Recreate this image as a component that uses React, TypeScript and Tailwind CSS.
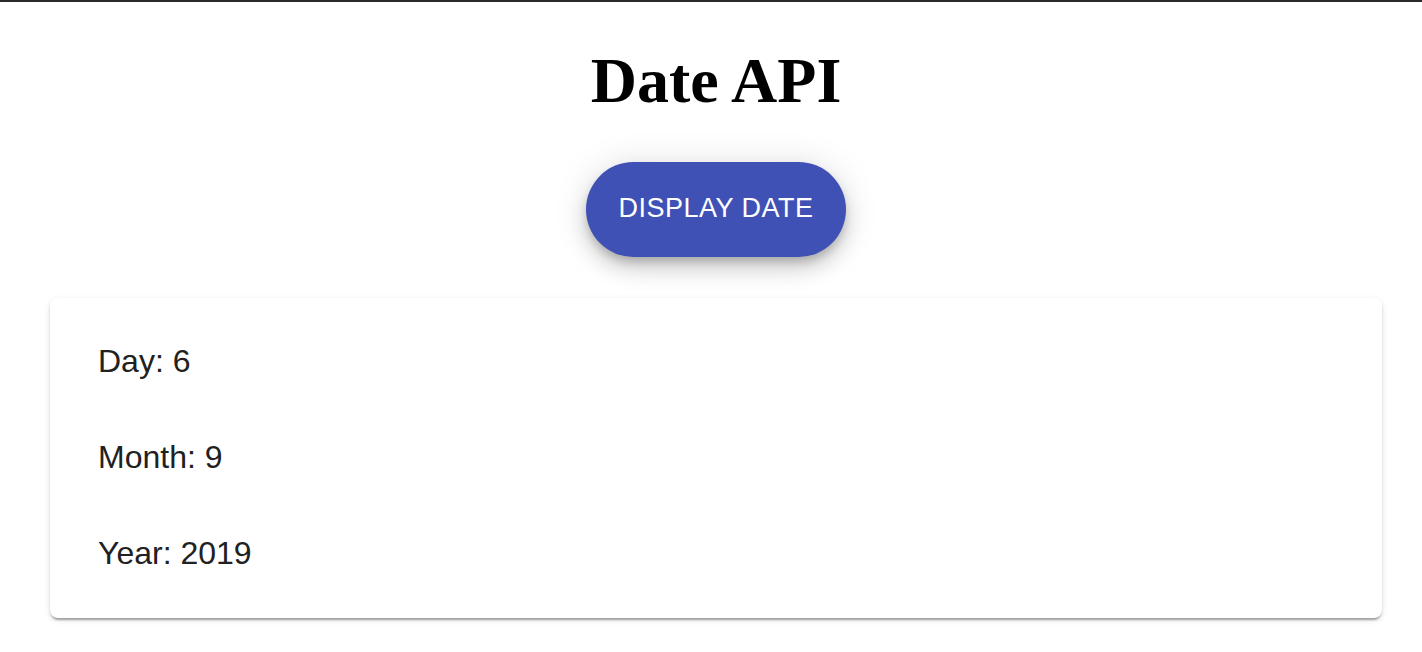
import React from "react";

const rows = [
      { label: "Day", value: 6 },
      { label: "Month", value: 9 },
      { label: "Year", value: 2019 },
];

export default function App() {
      return (
            <div className="min-h-[652px] bg-white">
                  <div className="h-[2px] bg-[#2b2b2b]" />
                  <div className="pl-[50px] pr-[40px]">
                        <h1 className="mt-[42px] text-center font-['Liberation_Serif',serif] text-[64px] leading-[74px] font-bold text-black">
                              Date API
                        </h1>
                        <div className="mt-[44px] flex justify-center">
                              <button
                                    type="button"
                                    className="flex h-[95px] w-[260px] items-center justify-center rounded-full bg-[#3f51b5] pb-[3px] font-['Liberation_Sans',Arial,sans-serif] text-[27px] tracking-[0.5px] font-normal text-white uppercase shadow-[0_6px_10px_-2px_rgba(0,0,0,0.2),0_12px_20px_0_rgba(0,0,0,0.14),0_2px_36px_0_rgba(0,0,0,0.12)]"
                              >
                                    Display Date
                              </button>
                        </div>
                        <div className="mt-[41px] flex flex-col gap-[48px] rounded-[8px] bg-white pt-[39px] pb-[41px] pl-[48px] shadow-[0_4px_2px_-2px_rgba(0,0,0,0.2),0_2px_2px_0_rgba(0,0,0,0.14),0_2px_6px_0_rgba(0,0,0,0.12)]">
                              {rows.map((row) => (
                                    <p
                                          key={row.label}
                                          className="font-['Liberation_Sans',Arial,sans-serif] text-[32px] leading-[48px] text-[#212121]"
                                    >
                                          {row.label}: {row.value}
                                    </p>
                              ))}
                        </div>
                  </div>
            </div>
      );
}
